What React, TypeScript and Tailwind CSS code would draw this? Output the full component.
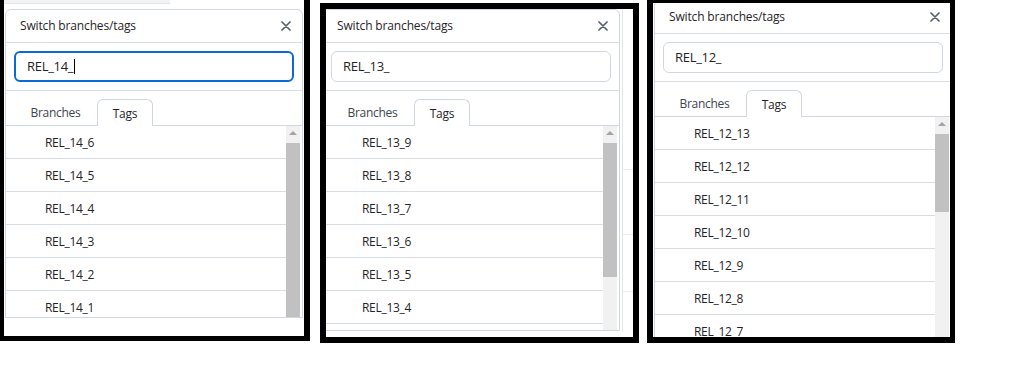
import React from "react";

type CardProps = {
    query: string;
    focused?: boolean;
    tags: string[];
    thumb: number;
    className: string;
};

function ScrollBar({ thumb }: { thumb: number }) {
    return (
        <div className="w-[14px] shrink-0 flex flex-col bg-[#f1f1f1]">
            <div className="h-[17px] flex items-start justify-center pt-[5px]">
                <div className="w-0 h-0 border-l-[4px] border-r-[4px] border-b-[4px] border-l-transparent border-r-transparent border-b-[#a3a3a3]"></div>
            </div>
            <div className="bg-[#c1c1c1] w-full" style={{ height: thumb }}></div>
        </div>
    );
}

function SwitchCard({ query, focused, tags, thumb, className }: CardProps) {
    return (
        <div className={`w-[298px] shrink-0 bg-white border border-[#d0d7de] rounded-t-md overflow-hidden flex flex-col text-[#1f2328] font-['Open_Sans','Noto_Sans',sans-serif] ${className}`}>
            {/* header */}
            <div className="h-[33px] shrink-0 flex items-center justify-between pl-[14px] pr-[11px] border-b border-[#d8dee4]">
                <span className="text-[12px] tracking-[-0.15px]">Switch branches/tags</span>
                <svg width="10" height="10" viewBox="0 0 10 10" className="text-[#57606a]">
                    <path d="M1 1 L9 9 M9 1 L1 9" stroke="currentColor" strokeWidth="1.7" strokeLinecap="round" />
                </svg>
            </div>

            {/* filter */}
            <div className="shrink-0 px-2 py-2 border-b border-[#d8dee4]">
                <div className={`h-[31px] rounded-md flex items-center pl-[11px] text-[13px] tracking-[-0.3px] ${focused ? "border-2 border-[#0969da] pl-[10px]" : "border border-[#d0d7de]"}`}>
                    <span>{query}</span>
                    {focused && <span className="w-[1px] h-[15px] bg-black ml-[1px]"></span>}
                </div>
            </div>

            {/* tabs */}
            <div className="shrink-0 h-[35px] flex items-end pl-2 border-b border-[#d0d7de]">
                <div className="w-[83px] h-[26px] pt-[2px] flex items-center justify-center text-[12px] tracking-[-0.3px] text-[#3d444d]">Branches</div>
                <div className="w-[56px] h-[27px] pt-[2px] -mb-[1px] flex items-center justify-center text-[12px] tracking-[-0.2px] bg-white border border-b-0 border-[#d0d7de] rounded-t-md">Tags</div>
            </div>

            {/* list */}
            <div className="flex flex-1 min-h-0 pr-[2px]">
                <div className="flex-1 flex flex-col">
                    {tags.map((t) => (
                        <div key={t} className="h-[33px] shrink-0 flex items-center pt-[1px] pl-[39px] text-[12px] tracking-[-0.3px] border-b border-[#d8dee4]">
                            {t}
                        </div>
                    ))}
                </div>
                <ScrollBar thumb={thumb} />
            </div>
        </div>
    );
}

export default function App() {
    return (
        <div className="w-[1019px] h-[378px] bg-white flex items-start">
            {/* Panel 1 */}
            <div className="w-[310px] h-[341px] shrink-0 border-l-4 border-r-[6px] border-b-[5px] border-black overflow-hidden flex flex-col">
                <div className="h-[9px] shrink-0">
                    <div className="w-[166px] h-[4px] bg-[#f3f3f3] border-b border-[#e1e4e8]"></div>
                </div>
                <SwitchCard
                    className="ml-[1px] h-[309px]"
                    query="REL_14_"
                    focused
                    thumb={180}
                    tags={["REL_14_6", "REL_14_5", "REL_14_4", "REL_14_3", "REL_14_2", "REL_14_1"]}
                />
            </div>

            {/* Panel 2 */}
            <div className="ml-[10px] mt-[3px] w-[319px] h-[340px] shrink-0 border-[6px] border-black overflow-hidden flex items-start">
                <SwitchCard
                    className="-ml-[4px] h-[322px]"
                    query="REL_13_"
                    thumb={134}
                    tags={["REL_13_9", "REL_13_8", "REL_13_7", "REL_13_6", "REL_13_5", "REL_13_4", "REL_13_3"]}
                />
                <div className="flex-1 h-[322px] flex flex-col">
                    <div className="ml-[2px] flex-1 border-l border-[#e1e4e8] flex flex-col">
                        <div className="h-[161px] border-b border-[#eaeef2]"></div>
                        <div className="h-[65px] border-b border-[#eaeef2]"></div>
                        <div className="h-[57px] border-b border-[#eaeef2]"></div>
                    </div>
                </div>
            </div>

            {/* Panel 3 */}
            <div className="ml-[8px] w-[308px] h-[343px] shrink-0 border-l-[6px] border-r-[5px] border-t-[3px] border-b-[6px] border-black overflow-hidden">
                <SwitchCard
                    className="-mt-[3px] ml-[1px] h-[345px]"
                    query="REL_12_"
                    thumb={78}
                    tags={["REL_12_13", "REL_12_12", "REL_12_11", "REL_12_10", "REL_12_9", "REL_12_8", "REL_12_7", "REL_12_6"]}
                />
            </div>
        </div>
    );
}
